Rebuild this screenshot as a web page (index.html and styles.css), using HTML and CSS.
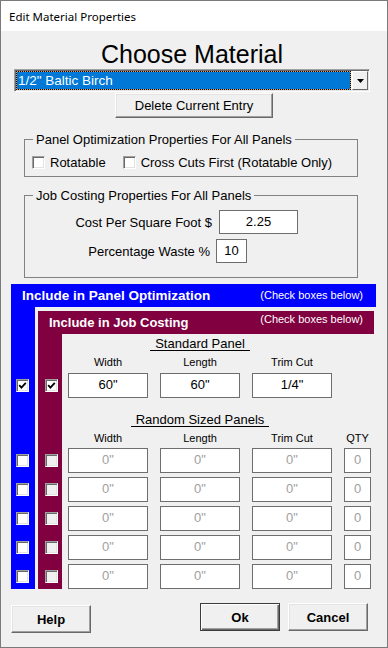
FILE: index.html
```html
<!DOCTYPE html>
<html lang="en">
<head>
    <meta charset="UTF-8">
    <meta name="viewport" content="width=device-width, initial-scale=1.0">
    <title>Edit Material Properties</title>
    <link rel="stylesheet" href="styles.css">
</head>
<body>
    <div class="window">
        <div class="titlebar">Edit Material Properties</div>

        <div class="top">
            <h1 class="heading">Choose Material</h1>
            <div class="combo">
                <div class="combo-value">1/2" Baltic Birch</div>
                <div class="combo-arrow">
                    <svg width="7" height="4" viewBox="0 0 7 4"><polygon points="0,0 7,0 3.5,4" fill="#000"/></svg>
                </div>
            </div>
            <button class="btn btn-delete">Delete Current Entry</button>
        </div>

        <fieldset class="group">
            <legend>Panel Optimization Properties For All Panels</legend>
            <div class="check-row">
                <label class="check"><span class="box"></span>Rotatable</label>
                <label class="check"><span class="box"></span>Cross Cuts First (Rotatable Only)</label>
            </div>
        </fieldset>

        <fieldset class="group group-cost">
            <legend>Job Costing Properties For All Panels</legend>
            <div class="cost-row">
                <span class="cost-label">Cost Per Square Foot $</span>
                <input class="field field-cost" type="text" value="2.25">
            </div>
            <div class="cost-row waste">
                <span class="cost-label">Percentage Waste %</span>
                <input class="field field-waste" type="text" value="10">
            </div>
        </fieldset>

        <div class="panels">
            <div class="opt-head">
                <span class="head-title">Include in Panel Optimization</span>
                <span class="head-note">(Check boxes below)</span>
            </div>

            <div class="prow prow-gap"><div class="cell-opt"></div></div>

            <div class="prow">
                <div class="cell-opt"></div>
                <div class="cost-head">
                    <span class="head-title">Include in Job Costing</span>
                    <span class="head-note">(Check boxes below)</span>
                </div>
            </div>

            <!-- standard panel -->
            <div class="prow">
                <div class="cell-opt"></div>
                <div class="cell-cost"></div>
                <div class="prow-body sect sect-std">
                    <div class="cols"><span class="sect-title">Standard Panel</span></div>
                    <div class="cols col-labels"><span>Width</span><span>Length</span><span>Trim Cut</span></div>
                </div>
            </div>
            <div class="prow">
                <div class="cell-opt"><span class="box checked"><svg width="9" height="9" viewBox="0 0 9 9"><path d="M1.2 4.2 L3.4 6.6 L7.8 1.8" fill="none" stroke="#000" stroke-width="1.8"/></svg></span></div>
                <div class="cell-cost"><span class="box checked"><svg width="9" height="9" viewBox="0 0 9 9"><path d="M1.2 4.2 L3.4 6.6 L7.8 1.8" fill="none" stroke="#000" stroke-width="1.8"/></svg></span></div>
                <div class="prow-body">
                    <div class="cols">
                        <input class="field" type="text" value='60"'>
                        <input class="field" type="text" value='60"'>
                        <input class="field" type="text" value='1/4"'>
                    </div>
                </div>
            </div>

            <!-- random sized panels -->
            <div class="prow">
                <div class="cell-opt"></div>
                <div class="cell-cost"></div>
                <div class="prow-body sect sect-rand">
                    <div class="cols"><span class="sect-title">Random Sized Panels</span></div>
                    <div class="cols col-labels"><span>Width</span><span>Length</span><span>Trim Cut</span><span>QTY</span></div>
                </div>
            </div>
            <div class="prow rand-row">
                <div class="cell-opt"><span class="box"></span></div>
                <div class="cell-cost"><span class="box off"></span></div>
                <div class="prow-body">
                    <div class="cols">
                        <input class="field empty" type="text" value='0"'>
                        <input class="field empty" type="text" value='0"'>
                        <input class="field empty" type="text" value='0"'>
                        <input class="field empty" type="text" value="0">
                    </div>
                </div>
            </div>
            <div class="prow rand-row">
                <div class="cell-opt"><span class="box"></span></div>
                <div class="cell-cost"><span class="box off"></span></div>
                <div class="prow-body">
                    <div class="cols">
                        <input class="field empty" type="text" value='0"'>
                        <input class="field empty" type="text" value='0"'>
                        <input class="field empty" type="text" value='0"'>
                        <input class="field empty" type="text" value="0">
                    </div>
                </div>
            </div>
            <div class="prow rand-row">
                <div class="cell-opt"><span class="box"></span></div>
                <div class="cell-cost"><span class="box off"></span></div>
                <div class="prow-body">
                    <div class="cols">
                        <input class="field empty" type="text" value='0"'>
                        <input class="field empty" type="text" value='0"'>
                        <input class="field empty" type="text" value='0"'>
                        <input class="field empty" type="text" value="0">
                    </div>
                </div>
            </div>
            <div class="prow rand-row">
                <div class="cell-opt"><span class="box"></span></div>
                <div class="cell-cost"><span class="box off"></span></div>
                <div class="prow-body">
                    <div class="cols">
                        <input class="field empty" type="text" value='0"'>
                        <input class="field empty" type="text" value='0"'>
                        <input class="field empty" type="text" value='0"'>
                        <input class="field empty" type="text" value="0">
                    </div>
                </div>
            </div>
            <div class="prow rand-row last">
                <div class="cell-opt"><span class="box"></span></div>
                <div class="cell-cost"><span class="box off"></span></div>
                <div class="prow-body">
                    <div class="cols">
                        <input class="field empty" type="text" value='0"'>
                        <input class="field empty" type="text" value='0"'>
                        <input class="field empty" type="text" value='0"'>
                        <input class="field empty" type="text" value="0">
                    </div>
                </div>
            </div>
        </div>

        <div class="actions">
            <button class="btn btn-action btn-help">Help</button>
            <button class="btn btn-action btn-ok">Ok</button>
            <button class="btn btn-action btn-cancel">Cancel</button>
        </div>
    </div>
</body>
</html>
```

FILE: styles.css
```css
* {
    margin: 0;
    padding: 0;
    box-sizing: border-box;
}

body {
    font-family: "Liberation Sans", Arial, sans-serif;
    font-size: 13px;
    color: #000;
    background: #f0f0f0;
}

.window {
    width: 388px;
    height: 648px;
    border: 1px solid #7a7a7a;
    background: #f0f0f0;
}

.titlebar {
    height: 30px;
    background: #fff;
    padding-left: 8px;
    display: flex;
    align-items: center;
    font-family: "Noto Sans", sans-serif;
    font-size: 11.5px;
}

.top {
    padding: 9px 17px 0 13px;
}

.heading {
    font-size: 25px;
    font-weight: normal;
    line-height: 28px;
    text-align: center;
}

.combo {
    margin-top: 1px;
    height: 23px;
    display: flex;
    padding: 1px;
    background: #fff;
    border: 1px solid;
    border-color: #a0a0a0 #fff #fff #a0a0a0;
    box-shadow: inset 1px 1px #696969, inset -1px -1px #e3e3e3;
}

.combo-value {
    flex: 1;
    background: #0078d7;
    color: #fff;
    border: 1px solid #e8a050;
    outline: 1px dotted #000;
    outline-offset: -1px;
    padding-left: 1px;
    font-size: 13.5px;
    line-height: 18px;
}

.combo-arrow {
    width: 16px;
    margin-left: 1px;
    background: #f0f0f0;
    border: 1px solid;
    border-color: #fff #696969 #696969 #fff;
    display: flex;
    align-items: center;
    justify-content: center;
}

.btn {
    background: #f0f0f0;
    border: 1px solid;
    border-color: #fff #696969 #696969 #fff;
    box-shadow: inset -1px -1px #a0a0a0, inset 1px 1px #e3e3e3;
    font-family: "Liberation Sans", Arial, sans-serif;
    font-size: 13px;
    color: #000;
}

.btn-delete {
    display: block;
    width: 158px;
    height: 25px;
    margin: 1px 0 0 101px;
}

/* group boxes */
.group {
    width: 334px;
    margin: 14px 0 0 23px;
    padding: 0 8px;
    border: 1px solid #828282;
}

.group legend {
    padding: 0 3px;
    font-size: 13px;
    line-height: 15px;
}

.group-cost {
    margin-top: 11px;
    padding-bottom: 14px;
}

.check-row {
    display: flex;
    align-items: center;
    margin: 8px 0 6px -1px;
    line-height: 15px;
}

.check {
    display: flex;
    align-items: center;
    gap: 5px;
}

.check + .check {
    margin-left: 17px;
}

.box {
    display: flex;
    align-items: center;
    justify-content: center;
    width: 13px;
    height: 13px;
    background: #fff;
    border: 1px solid;
    border-color: #a0a0a0 #fff #fff #a0a0a0;
    box-shadow: inset 1px 1px #696969, inset -1px -1px #e3e3e3;
}

.box.off {
    background: #f0f0f0;
}

.cost-row {
    display: flex;
    align-items: center;
    margin-top: 7px;
}

.cost-row.waste {
    margin-top: 5px;
}

.cost-label {
    width: 179px;
    margin-right: 7px;
    text-align: right;
}

.waste .cost-label {
    width: 177px;
    margin-right: 6px;
}

.field {
    height: 25px;
    background: #fff;
    border: 1px solid #6e6e6e;
    padding: 0 0 2px;
    font-family: "Liberation Sans", Arial, sans-serif;
    font-size: 13px;
    color: #000;
    text-align: center;
    outline: none;
    min-width: 0;
}

.field.empty {
    color: #a0a0a0;
}

.field-cost {
    width: 79px;
    height: 24px;
}

.field-waste {
    width: 31px;
    height: 24px;
}

/* panel sections */
.panels {
    width: 365px;
    margin: 6px 0 0 10px;
}

.opt-head {
    height: 23px;
    background: #0000ff;
    color: #fff;
    display: flex;
    justify-content: space-between;
    padding: 0 13px 0 11px;
    line-height: 23px;
}

.head-title {
    font-weight: bold;
    font-size: 13.5px;
}

.head-note {
    font-size: 11px;
}

.prow {
    display: grid;
    grid-template-columns: 24px 3px 24px 1fr;
}

.prow-gap {
    height: 4px;
}

.cell-opt {
    grid-column: 1;
    background: #0000ff;
}

.cell-cost {
    grid-column: 3;
    background: #800040;
}

.cell-opt .box {
    margin: 6px 0 0 5px;
}

.cell-cost .box {
    margin: 6px 0 0 7px;
}

.cost-head {
    grid-column: 3 / 5;
    height: 23px;
    margin-right: 2px;
    background: #800040;
    color: #fff;
    display: flex;
    justify-content: space-between;
    align-items: flex-start;
    padding: 0 11px;
    line-height: 23px;
}

.cost-head .head-title {
    font-size: 13px;
}

.cost-head .head-note {
    line-height: 17px;
}

.prow-body {
    grid-column: 4;
    padding-left: 6px;
}

.cols {
    display: grid;
    grid-template-columns: 80px 80px 80px 27px;
    column-gap: 12px;
}

.sect-title {
    grid-column: 1 / 4;
    justify-self: center;
    padding: 0 5px;
    line-height: 12px;
    border-bottom: 1px solid #000;
    white-space: nowrap;
}

.col-labels {
    margin-top: 5px;
    font-size: 11px;
    line-height: 13px;
    text-align: center;
}

.sect-std {
    padding: 4px 0 4px 6px;
}

.sect-rand {
    padding: 16px 0 3px 6px;
}

.rand-row .prow-body {
    padding-bottom: 4px;
}

.rand-row.last .prow-body {
    padding-bottom: 0;
}

/* bottom buttons */
.actions {
    display: flex;
    align-items: flex-start;
    padding: 14px 19px 0 10px;
}

.btn-action {
    width: 80px;
    height: 28px;
    font-weight: bold;
}

.btn-help {
    margin-top: 2px;
}

.btn-ok {
    margin-left: auto;
    border-color: #3c3c3c;
    box-shadow: inset 1px 1px #fff, inset -1px -1px #696969, inset -2px -2px #a0a0a0;
}

.btn-cancel {
    margin-left: 8px;
}
```
